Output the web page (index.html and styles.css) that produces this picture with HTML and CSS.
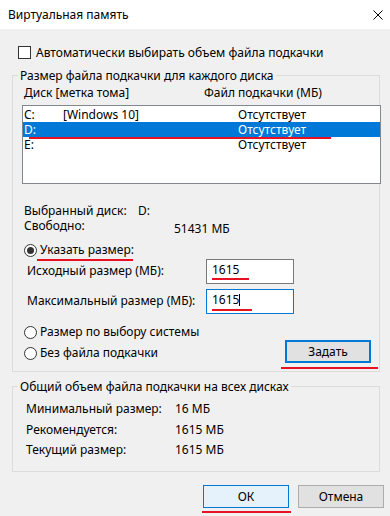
FILE: index.html
```html
<!DOCTYPE html>
<html lang="ru">
<head>
<meta charset="utf-8">
<title>Виртуальная память</title>
<link rel="stylesheet" href="styles.css">
</head>
<body>
<div class="window">
  <div class="titlebar">
    <span class="title">Виртуальная память</span>
    <svg class="close" width="10" height="10" viewBox="0 0 10 10"><path d="M0.5 0.5 L9.5 9.5 M9.5 0.5 L0.5 9.5" stroke="#000" stroke-width="1" fill="none"/></svg>
  </div>
  <div class="main">
    <div class="autocheck"><span class="checkbox"></span><span>Автоматически выбирать объем файла подкачки</span></div>

    <section class="group group-disks">
      <div class="legend">Размер файла подкачки для каждого диска</div>
      <div class="list-head"><span class="col-head">Диск [метка тома]</span><span>Файл подкачки (МБ)</span></div>
      <div class="listbox">
        <div class="lrow"><span class="c1">C:</span><span class="c2">[Windows 10]</span><span>Отсутствует</span></div>
        <div class="lrow selected"><span class="c1">D:</span><span class="c2"></span><span>Отсутствует</span><span class="mark mark-row"></span></div>
        <div class="lrow"><span class="c1">E:</span><span class="c2"></span><span>Отсутствует</span></div>
      </div>
      <div class="info info-disk"><span class="info-label label-disk">Выбранный диск:</span><span>D:</span></div>
      <div class="info"><span class="info-label label-free">Свободно:</span><span class="free">51431 МБ</span></div>

      <div class="radio-row radio-custom">
        <svg class="radio" width="13" height="13" viewBox="0 0 13 13"><circle cx="6.5" cy="6.5" r="6" fill="#fff" stroke="#333" stroke-width="1"/><circle cx="6.5" cy="6.5" r="3.5" fill="#333"/></svg>
        <span class="radio-text">Указать размер:<span class="mark mark-radio"></span></span>
      </div>
      <div class="field-row field-initial">
        <span class="field-label">Исходный размер (МБ):</span>
        <div class="edit">1615<span class="mark mark-edit1"></span></div>
      </div>
      <div class="field-row field-max">
        <span class="field-label">Максимальный размер (МБ):</span>
        <div class="edit edit-focus">1615<span class="caret"></span><span class="mark mark-edit2"></span></div>
      </div>
      <div class="radio-row radio-system">
        <svg class="radio" width="13" height="13" viewBox="0 0 13 13"><circle cx="6.5" cy="6.5" r="6" fill="#fff" stroke="#333" stroke-width="1"/></svg>
        <span class="radio-text">Размер по выбору системы</span>
      </div>
      <div class="last-row">
        <div class="radio-row radio-none">
          <svg class="radio" width="13" height="13" viewBox="0 0 13 13"><circle cx="6.5" cy="6.5" r="6" fill="#fff" stroke="#333" stroke-width="1"/></svg>
          <span class="radio-text">Без файла подкачки</span>
        </div>
        <div class="btn btn-set">Задать<span class="mark mark-set"></span></div>
      </div>
    </section>

    <section class="group group-total">
      <div class="legend">Общий объем файла подкачки на всех дисках</div>
      <div class="trow trow-min"><span class="tlabel">Минимальный размер:</span><span>16 МБ</span></div>
      <div class="trow trow-rec"><span class="tlabel">Рекомендуется:</span><span>1615 МБ</span></div>
      <div class="trow trow-cur"><span class="tlabel">Текущий размер:</span><span>1615 МБ</span></div>
    </section>

    <div class="buttons">
      <div class="btn btn-ok">ОК<span class="mark mark-ok"></span></div>
      <div class="btn btn-cancel">Отмена</div>
    </div>
  </div>
</div>
</body>
</html>
```

FILE: styles.css
```css
* { box-sizing: border-box; }
html, body { margin: 0; padding: 0; }
body {
  width: 390px;
  height: 516px;
  overflow: hidden;
  background: #f0f0f0;
  font-family: "Noto Sans", "Open Sans", sans-serif;
  font-size: 12px;
  line-height: 15px;
  color: #000;
}
.window { width: 390px; height: 516px; background: #f0f0f0; }

.titlebar {
  height: 29px;
  background: #fff;
  display: flex;
  justify-content: space-between;
  align-items: flex-start;
  padding: 7px 7px 0 8px;
}
.close { margin-top: 3px; }

.main { padding: 0 10px 0 12px; }

.autocheck {
  margin-top: 16px;
  padding-left: 6px;
  display: flex;
  align-items: center;
  gap: 5px;
  height: 15px;
}
.checkbox {
  width: 13px;
  height: 13px;
  border: 1px solid #333;
  background: #fff;
}

.group { border: 1px solid #dcdcdc; }
.group-disks { margin-top: 15px; padding-bottom: 8px; }
.group-total { margin-top: 14px; padding-bottom: 14px; }
.legend {
  width: max-content;
  margin: -8px 0 0 5px;
  padding: 0 2px;
  background: #f0f0f0;
}

.list-head { margin-top: 2px; padding-left: 11px; display: flex; }
.col-head { width: 180px; }

.listbox {
  position: relative;
  margin: 5px -2px 0 9px;
  height: 79px;
  border: 1px solid #828790;
  background: #fff;
  padding-top: 1px;
}
.lrow {
  position: relative;
  display: flex;
  height: 15px;
  padding-left: 1px;
}
.lrow .c1 { width: 39px; }
.lrow .c2 { width: 175px; }
.lrow.selected { background: #0078d7; color: #fff; }

.mark { position: absolute; height: 2px; background: #e81123; }
.mark-row { left: 6px; top: 15px; width: 302px; height: 2px; }
.mark-radio { left: -3px; top: 17px; width: 96px; }
.mark-edit1 { left: 5px; top: 18px; width: 37px; }
.mark-edit2 { left: 5px; top: 19px; width: 40px; }
.mark-set { left: -6px; top: 25px; width: 97px; }
.mark-ok { left: -2px; top: 25px; width: 89px; }

.info { display: flex; padding-left: 11px; }
.info-disk { margin-top: 19px; }
.label-disk { width: 114px; }
.label-free { width: 150px; }
.free { margin-top: 3px; }

.radio-row { display: flex; align-items: flex-start; gap: 3px; padding-left: 11px; height: 15px; }
.radio { margin-top: 2px; flex: none; }
.radio-text { position: relative; }
.radio-custom { margin-top: 6px; }
.radio-system { margin-top: 10px; }

.field-row { display: flex; align-items: flex-start; padding-left: 14px; height: 25px; }
.field-initial { margin-top: 2px; }
.field-max { margin-top: 5px; }
.field-label { width: 179px; margin-top: 4px; }
.edit {
  position: relative;
  width: 88px;
  height: 25px;
  border: 1px solid #7a7a7a;
  background: #fff;
  padding: 2px 5px;
  display: flex;
  align-items: flex-start;
}
.edit-focus { border-color: #0078d7; }
.caret { width: 1px; height: 12px; background: #000; margin-top: 2px; }

.last-row { display: flex; justify-content: space-between; align-items: flex-start; margin-top: 1px; padding-right: 8px; }
.radio-none { margin-top: 5px; }

.btn {
  position: relative;
  width: 86px;
  height: 23px;
  display: flex;
  align-items: center;
  justify-content: center;
  background: #e1e1e1;
  border: 1px solid #adadad;
}
.btn-set { border: 2px solid #0078d7; }
.btn-ok { background: #e5f1fb; border-color: #0078d7; }

.trow { display: flex; padding-left: 13px; }
.tlabel { width: 149px; }
.trow-min { margin-top: 7px; }
.trow-rec { margin-top: 6px; }
.trow-cur { margin-top: 5px; }

.buttons {
  display: flex;
  justify-content: flex-end;
  gap: 9px;
  margin: 13px -4px 0 0;
}
```
